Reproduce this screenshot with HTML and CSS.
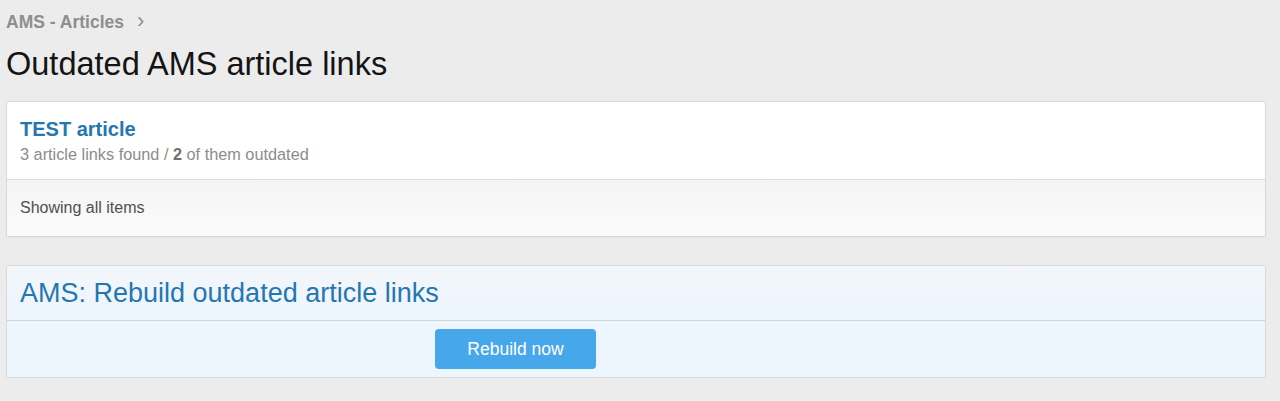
FILE: index.html
```html
<!DOCTYPE html>
<html>
<head>
<meta charset="utf-8">
<link rel="stylesheet" href="styles.css">
</head>
<body>
<div class="page">
  <nav class="crumbs"><a class="crumb">AMS - Articles</a><span class="chev">&#8250;</span></nav>
  <h1 class="title">Outdated AMS article links</h1>

  <section class="block">
    <div class="block-body">
      <h2 class="item-title">TEST article</h2>
      <div class="item-meta">3 article links found / <b>2</b> of them outdated</div>
    </div>
    <div class="block-footer">Showing all items</div>
  </section>

  <section class="block block-form">
    <h2 class="form-header">AMS: Rebuild outdated article links</h2>
    <div class="form-submit">
      <button class="btn">Rebuild now</button>
    </div>
  </section>
</div>
</body>
</html>
```

FILE: styles.css
```css
html, body {
  margin: 0;
  padding: 0;
  background: #ececec;
  font-family: "Liberation Sans", Arial, sans-serif;
}
.page {
  padding: 12px 14px 0 6px;
}
.crumbs {
  display: flex;
  align-items: center;
  gap: 13px;
  height: 20px;
  font-size: 17.5px;
  font-weight: bold;
  color: #8e8e8e;
}
.chev {
  font-weight: normal;
  font-size: 22px;
  color: #8e8e8e;
  line-height: 20px;
  margin-top: -3px;
}
.title {
  margin: 13px 0 0 0;
  font-size: 32.5px;
  font-weight: normal;
  color: #141414;
  line-height: 39px;
}
.block {
  margin-top: 17px;
  background: #fff;
  border: 1px solid #d8d8d8;
  border-radius: 3px;
  box-shadow: 0 1px 1px rgba(0,0,0,0.04);
  overflow: hidden;
}
.block-body {
  padding: 15px 13px 0;
  height: 77px;
  box-sizing: border-box;
}
.item-title {
  margin: 0;
  font-size: 20px;
  font-weight: bold;
  color: #2577b1;
  line-height: 24px;
}
.item-meta {
  font-size: 16.3px;
  color: #8c8c8c;
  line-height: 20px;
  margin-top: 3px;
}
.item-meta b {
  color: #6e6e6e;
}
.block-footer {
  border-top: 1px solid #dcdcdc;
  background: linear-gradient(#f4f4f4, #fbfbfb);
  height: 57px;
  display: flex;
  align-items: center;
  padding: 0 13px;
  font-size: 16px;
  color: #505050;
  box-sizing: border-box;
}
.block-form {
  margin-top: 28px;
  background: #edf5fd;
}
.form-header {
  margin: 0;
  height: 55px;
  box-sizing: border-box;
  padding: 0 13px;
  display: flex;
  align-items: center;
  font-size: 27px;
  font-weight: normal;
  color: #2577b1;
  background: linear-gradient(#f3f7fb, #ecf4fc);
  border-bottom: 1px solid #d3d3d3;
}
.form-submit {
  height: 56px;
  display: flex;
  align-items: flex-start;
  padding: 8px 0 0 428px;
  box-sizing: border-box;
  background: #edf5fd;
}
.btn {
  width: 161px;
  height: 40px;
  border: 0;
  border-radius: 4px;
  background: #47a7eb;
  color: #fff;
  font-family: "Liberation Sans", Arial, sans-serif;
  font-size: 17.5px;
}
```
